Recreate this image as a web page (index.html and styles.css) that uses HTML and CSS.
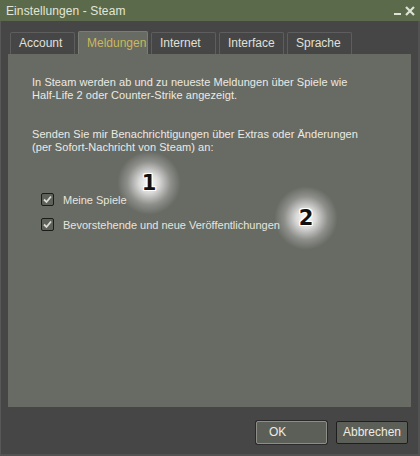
FILE: index.html
```html
<!DOCTYPE html>
<html lang="de">
<head>
    <meta charset="UTF-8">
    <title>Einstellungen - Steam</title>
    <link rel="stylesheet" href="styles.css">
</head>
<body>
    <div class="window">
        <!-- Titelleiste -->
        <div class="titlebar">
            <span class="title">Einstellungen - Steam</span>
            <div class="controls">
                <svg width="8" height="10" viewBox="0 0 8 10"><rect x="0" y="7" width="7" height="2" fill="#dde2d4"/></svg>
                <svg width="10" height="10" viewBox="0 0 10 10"><path d="M1 1 L9 9 M9 1 L1 9" stroke="#dde2d4" stroke-width="2.2"/></svg>
            </div>
        </div>

        <!-- Reiter -->
        <div class="tabs">
            <div class="tab w65">Account</div>
            <div class="tab active w70">Meldungen</div>
            <div class="tab w65">Internet</div>
            <div class="tab w65">Interface</div>
            <div class="tab w65">Sprache</div>
        </div>

        <!-- Inhalt -->
        <div class="panel">
            <p class="info">In Steam werden ab und zu neueste Meldungen über Spiele wie<br>Half-Life 2 oder Counter-Strike angezeigt.</p>
            <p class="info second">Senden Sie mir Benachrichtigungen über Extras oder Änderungen<br>(per Sofort-Nachricht von Steam) an:</p>

            <div class="checks">
                <label class="check">
                    <span class="box"><svg width="11" height="11" viewBox="0 0 11 11"><path d="M2 5.5 L4.5 8 L9 2.5" fill="none" stroke="#dcdcd4" stroke-width="1.8"/></svg></span>
                    Meine Spiele
                </label>
                <label class="check">
                    <span class="box"><svg width="11" height="11" viewBox="0 0 11 11"><path d="M2 5.5 L4.5 8 L9 2.5" fill="none" stroke="#dcdcd4" stroke-width="1.8"/></svg></span>
                    Bevorstehende und neue Veröffentlichungen
                </label>
            </div>

            <div class="badge b1">1</div>
            <div class="badge b2">2</div>
        </div>

        <!-- Knöpfe -->
        <div class="footer">
            <div class="btn focus">OK</div>
            <div class="btn">Abbrechen</div>
        </div>
    </div>
</body>
</html>
```

FILE: styles.css
```css
html, body{
    margin: 0;
    padding: 0;
    background-color: #464646;
}
.window{
    width: 420px;
    height: 456px;
    box-sizing: border-box;
    background-color: #464646;
    border-left: 1px solid #585858;
    border-right: 2px solid #525252;
    border-bottom: 2px solid #525252;
    display: flex;
    flex-direction: column;
    font-family: "Liberation Sans", Arial, sans-serif;
    font-size: 11px;
    color: #e6e6de;
}

.titlebar{
    height: 21px;
    margin: 0 -2px 0 -1px;
    background-color: #5a6a4a;
    display: flex;
    align-items: center;
    justify-content: space-between;
    padding: 0 5px 0 6px;
}
.title{
    font-size: 12px;
    color: #e2e6da;
    letter-spacing: 0.1px;
}
.controls{
    display: flex;
    align-items: center;
    gap: 3px;
    padding-top: 1px;
}

.tabs{
    display: flex;
    align-items: flex-end;
    gap: 3px;
    margin-top: 10px;
    padding-left: 9px;
    height: 23px;
}
.tab{
    height: 22px;
    box-sizing: border-box;
    border: 1px solid #5e5e5e;
    border-bottom: none;
    border-radius: 2px 2px 0 0;
    padding-left: 8px;
    line-height: 21px;
    font-size: 12px;
    color: #e0e0d8;
}
.w65{ width: 65px; }
.w70{ width: 70px; }
.tab.active{
    height: 23px;
    background-color: #686a64;
    border-color: #7a7c76;
    color: #c9b95a;
    line-height: 23px;
}

.panel{
    position: relative;
    height: 353px;
    margin: 0 7px;
    background-color: #686a64;
    padding: 22px 24px 0 24px;
    box-sizing: border-box;
}
.info{
    margin: 0;
    line-height: 13px;
    color: #ebebe3;
    letter-spacing: 0.05px;
}
.info.second{
    margin-top: 26px;
}

.checks{
    margin-top: 39px;
    padding-left: 9px;
    display: flex;
    flex-direction: column;
    gap: 12px;
}
.check{
    display: flex;
    align-items: center;
    gap: 9px;
    color: #e6e6de;
}
.box{
    width: 13px;
    height: 13px;
    box-sizing: border-box;
    border: 1px solid #1c1c1a;
    border-radius: 2px;
    background-color: #5e605a;
    display: flex;
    align-items: center;
    justify-content: center;
}

.badge{
    position: absolute;
    width: 64px;
    height: 64px;
    border-radius: 50%;
    background: radial-gradient(circle, rgba(255,255,255,1) 0%, rgba(255,255,255,0.75) 22%, rgba(255,255,255,0.25) 48%, rgba(255,255,255,0) 70%);
    display: flex;
    align-items: center;
    justify-content: center;
    font-family: "DejaVu Sans", sans-serif;
    font-weight: bold;
    font-size: 21px;
    color: #111;
    text-shadow: 1px 0 0 #fff, -1px 0 0 #fff, 0 1px 0 #fff, 0 -1px 0 #fff, 1px 1px 0 #fff, -1px -1px 0 #fff, 1px -1px 0 #fff, -1px 1px 0 #fff;
}
.b1{
    left: 109px;
    top: 97px;
}
.b2{
    left: 266px;
    top: 132px;
}

.footer{
    display: flex;
    justify-content: flex-end;
    gap: 9px;
    padding: 14px 10px 0 0;
}
.btn{
    width: 72px;
    height: 23px;
    box-sizing: border-box;
    border: 1px solid #1e1e1e;
    border-radius: 2px;
    background-color: #5c5e58;
    line-height: 21px;
    font-size: 12px;
    text-align: center;
    color: #ecece4;
}
.btn.focus{
    width: 71px;
    border-color: #8e8e88;
    box-shadow: 0 0 0 1px #2a2a2a;
    text-align: left;
    padding-left: 12px;
}
```
